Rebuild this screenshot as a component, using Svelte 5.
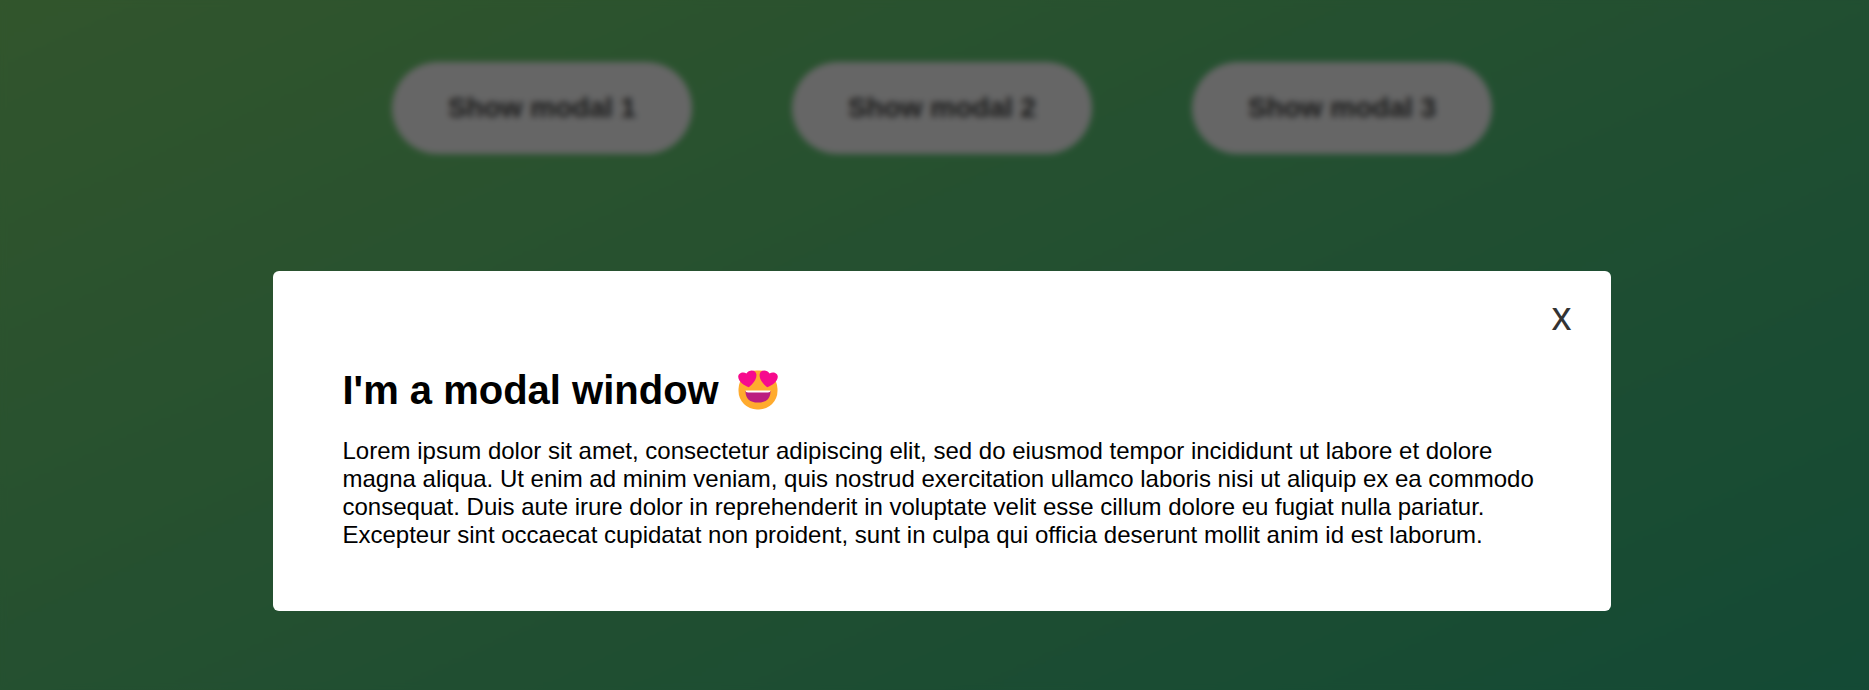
<script>
  const buttons = [1, 2, 3];
</script>

<main class="page">
  <div class="buttons">
    {#each buttons as n}
      <button class="show-modal">Show modal {n}</button>
    {/each}
  </div>
  <div class="overlay"></div>
  <section class="modal" role="dialog" aria-modal="true">
    <button class="close-modal">x</button>
    <h1>
      <span>I'm a modal window</span>
      <svg width="40" height="40" viewBox="0 0 40 40" aria-hidden="true">
        <rect x=".5" y=".5" width="39" height="39" rx="18.5" fill="#ffab2e" />
        <path d="M7.5 21H32.5Q32.5 32.6 20 32.6Q7.5 32.6 7.5 21Z" fill="#bb1d80" />
        <path d="M7.5 20.5H32.5Q32.5 22.5 30 22.5H10Q7.5 22.5 7.5 20.5Z" fill="#fff" />
        <path d="M10.8 17.2C6 15.4.4 12 .2 6.8C.1 3.2 5 .8 8.5 3.6C10.5-.3 17.9-.8 18.4 4.5C18.8 9 14.8 14 10.8 17.2Z" fill="#f70a8d" />
        <path d="M29.2 17.2C34 15.4 39.6 12 39.8 6.8C39.9 3.2 35 .8 31.5 3.6C29.5-.3 22.1-.8 21.6 4.5C21.2 9 25.2 14 29.2 17.2Z" fill="#f70a8d" />
      </svg>
    </h1>
    <p>
      Lorem ipsum dolor sit amet, consectetur adipiscing elit, sed do eiusmod tempor incididunt ut
      labore et dolore magna aliqua. Ut enim ad minim veniam, quis nostrud exercitation ullamco
      laboris nisi ut aliquip ex ea commodo consequat. Duis aute irure dolor in reprehenderit in
      voluptate velit esse cillum dolore eu fugiat nulla pariatur. Excepteur sint occaecat cupidatat
      non proident, sunt in culpa qui officia deserunt mollit anim id est laborum.
    </p>
  </section>
</main>

<style>
  :global(body) {
    margin: 0;
    overflow: hidden;
  }
  .page {
    position: relative;
    height: 690px;
    overflow: hidden;
    font-family: "Liberation Sans", Arial, sans-serif;
    background: linear-gradient(to top left, #28b487, #7dd56f) -14px 0 / 1911px 882px;
  }
  .buttons {
    display: flex;
    justify-content: center;
    gap: 100px;
    padding: 62px 0 0 15px;
  }
  .show-modal {
    box-sizing: border-box;
    width: 300px;
    height: 92px;
    padding: 0;
    border: none;
    border-radius: 100px;
    background: #fff;
    color: #444;
    font: bold 28px "Liberation Sans", Arial, sans-serif;
  }
  .overlay {
    position: absolute;
    inset: 0;
    background: rgba(0, 0, 0, 0.6);
    backdrop-filter: blur(3px);
  }
  .modal {
    position: absolute;
    top: 271px;
    left: 273px;
    box-sizing: border-box;
    width: 1338px;
    height: 340px;
    padding: 96px 70px 0 69.5px;
    border-radius: 6px;
    background: #fff;
    color: #000;
  }
  .close-modal {
    position: absolute;
    top: 22px;
    right: 39.5px;
    padding: 0;
    border: none;
    background: none;
    color: #333;
    font: 40px/46px "Liberation Sans", Arial, sans-serif;
  }
  h1 {
    display: flex;
    align-items: flex-start;
    gap: 19px;
    height: 46px;
    margin: 0 0 24px;
    font-size: 40px;
    line-height: 46px;
  }
  h1 svg {
    margin-top: 3px;
  }
  p {
    margin: 0;
    font-size: 24px;
    line-height: 28px;
  }
</style>
